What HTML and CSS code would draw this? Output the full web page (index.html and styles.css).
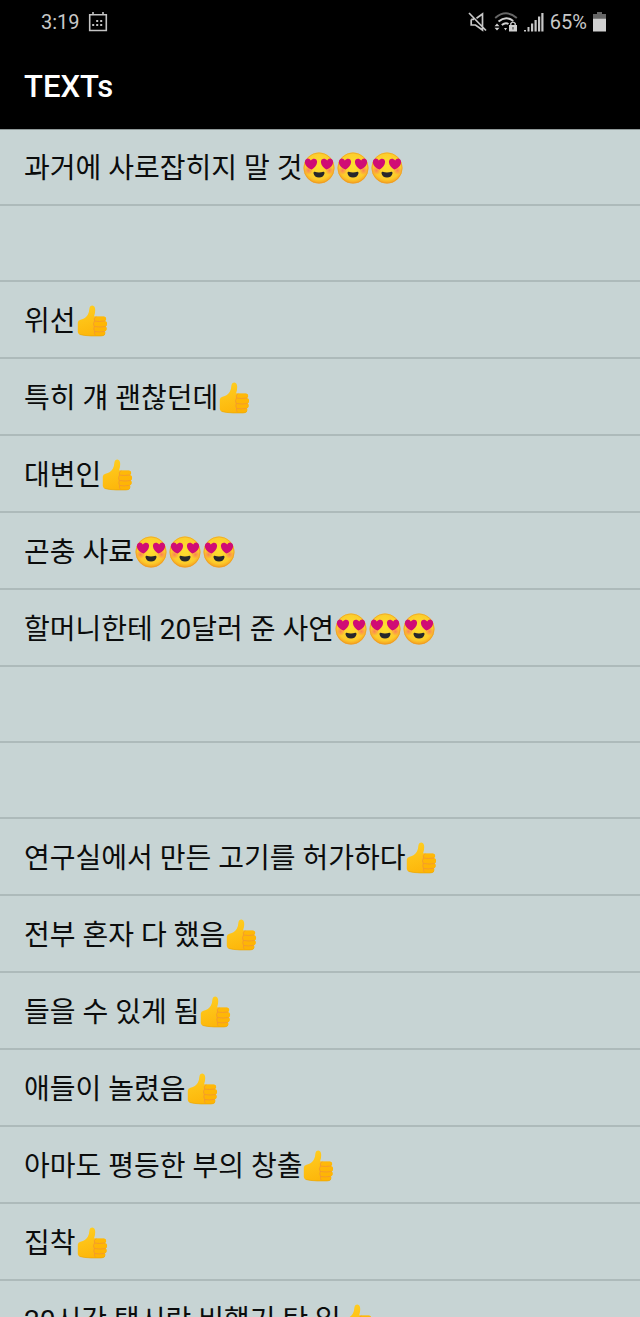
FILE: index.html
```
<!DOCTYPE html>
<html lang="ko">
<head>
<meta charset="utf-8">
<meta name="viewport" content="width=device-width, initial-scale=1">
<title>TEXTs</title>
<link rel="stylesheet" href="styles.css">
</head>
<body>
<svg class="sprite" aria-hidden="true">
  <defs>
    <radialGradient id="skin" cx=".5" cy=".42" r=".6">
      <stop offset="0" stop-color="#fde030"/><stop offset=".75" stop-color="#fccb2b"/><stop offset="1" stop-color="#f4981e"/>
    </radialGradient>
    <radialGradient id="blush"><stop offset="0" stop-color="#fb8553"/><stop offset="1" stop-color="#fb8553" stop-opacity="0"/></radialGradient>
    <linearGradient id="hand" x1="0" y1="0" x2=".3" y2="1"><stop offset="0" stop-color="#ffcf22"/><stop offset="1" stop-color="#fdb70b"/></linearGradient>
    <symbol id="love" viewBox="0 0 34 32">
      <circle cx="17" cy="16" r="15.4" fill="url(#skin)"/>
      <circle cx="17" cy="16" r="15.1" fill="none" stroke="#eb9a24" stroke-width=".6"/>
      <circle cx="6.5" cy="18.500" r="4.5" fill="url(#blush)"/><circle cx="27.5" cy="18.500" r="4.5" fill="url(#blush)"/>
      <path d="M9.8 17.6C5.6 16 2.2 12.6 3 8.9C3.7 6 7.4 5.5 8.8 8.6C11.1 5.400 15.2 6.500 15.1 10C15 13.200 12.600 15.800 9.800 17.600Z" fill="#d00c75"/>
      <path d="M24.200 17.600C28.400 16 31.800 12.600 31 8.900C30.300 6 26.600 5.500 25.200 8.600C22.900 5.400 18.800 6.500 18.900 10C19 13.200 21.400 15.800 24.200 17.600Z" fill="#d00c75"/>
      <path d="M12.600 19.700Q17 21.200 21.400 19.700Q22.700 19.500 22.500 21.200C22 24 20 25.500 17 25.500S12 24 11.500 21.200Q11.300 19.500 12.600 19.700Z" fill="#26282b"/>
    </symbol>
    <symbol id="thumb" viewBox="0 0 34 32">
      <path d="M1.800 17.500Q2 15.200 4.500 14.700Q9.500 13.600 11.800 9.800Q13.200 7.300 13.400 3.600Q13.800 .500 16.400 .500Q19.200 .900 19.200 5Q19.300 8 18.100 11.200L21 11.600H28Q30.300 12 30.200 14Q30.100 15.600 29 16Q31.300 16.700 31.100 19Q30.900 21 29.600 21.600Q31.200 22.500 30.600 24.500Q30.200 26 28.700 26.400Q29.900 27.600 29 29.300Q28 31 25 31H15Q7.500 30.800 3.800 29.500Q1.800 28.900 1.800 27Z" fill="url(#hand)"/>
      <path d="M20.300 11.600H28Q30.300 12 30.200 14Q30.100 15.600 29 16Q31.300 16.700 31.100 19Q30.900 21 29.600 21.600Q31.200 22.500 30.600 24.500Q30.200 26 28.700 26.400Q29.900 27.600 29 29.300Q28 31 25 31H19.500Q17.500 29.500 18.600 26.600Q17 24 18.200 21.400Q16.600 18.500 18.500 16Q17 13 20.300 11.600Z" fill="#ffb300" fill-opacity=".6"/>
      <path d="M18.500 16Q23 17 29 16M18.200 21.500Q24 22.500 29.600 21.600M18.600 26.500Q23 27.300 28.700 26.400M20.300 11.600Q17.200 13 18.500 16Q16.700 18.500 18.200 21.500Q17.200 24 18.600 26.500Q18 28.500 19.200 30" fill="none" stroke="#f19534" stroke-width=".8"/>
      <path d="M3.500 29.400Q8 30.700 15 30.900H25Q28 30.900 29 29.300" fill="none" stroke="#eda600" stroke-width=".7"/>
    </symbol>
  </defs>
</svg>
<header class="top">
  <div class="status">
    <time class="clock">3:19</time>
    <svg class="calendar" width="20" height="20" viewBox="0 0 20 20" role="img" aria-label="Calendar">
      <path d="M1.700 2.800H18.300V18.500H1.700ZM5 0V3M15 0V3" fill="none" stroke="#c4c4c4" stroke-width="1.600"/>
      <path d="M8.200 8h2v2h-2zM12.200 8h2v2h-2zM4.200 12h2v2h-2zM8.200 12h2v2h-2zM12.200 12h2v2h-2z" fill="#c4c4c4"/>
    </svg>
    <div class="indicators">
      <svg width="20" height="20" viewBox="0 0 20 20" role="img" aria-label="Muted">
        <path d="M3.200 7.500V13H7.500L14.500 18V2L8.500 6.300M3.200 7.300H6M1 1L18 18.500" fill="none" stroke="#c8c8c8" stroke-width="1.700"/>
      </svg>
      <svg width="24" height="20" viewBox="0 0 24 20" role="img" aria-label="Secure Wi-Fi">
        <path d="M1.200 6Q12 -3.500 22.800 6" fill="none" stroke="#666" stroke-width="1.900"/>
        <path d="M4.500 9.500Q12 3.200 19.200 9M7.800 13Q11.500 10 14.500 12" fill="none" stroke="#d0d0d0" stroke-width="2"/>
        <path d="M.500 14.300L3 11.500L5.500 14.300ZM.500 15.800H5.500L3 18.500ZM10 16H13L11.500 18.500ZM15 13H23V19.500H15Z" fill="#d0d0d0"/>
        <path d="M16.800 13.500V11.500Q19 8.800 21.200 11.500V13.500" fill="none" stroke="#d0d0d0" stroke-width="1.300"/>
        <path d="M18.500 15h1v2.500h-1z" fill="#333"/>
      </svg>
      <svg width="20" height="20" viewBox="0 0 20 20" role="img" aria-label="Signal strength">
        <path d="M0 18h2v1.500H0zM3.500 15h2v4.500h-2zM7 11.500h2.200v8H7zM10.500 8h2.200v11.500h-2.200zM14 4.500h2.200v15H14zM17.300 1h2.200v18.500h-2.200z" fill="#c8c8c8"/>
      </svg>
      <span class="percent">65%</span>
      <svg class="battery" width="13" height="20" viewBox="0 0 13 20" role="img" aria-label="Battery">
        <path d="M4 0h5v2h4v4.500H0V2h4z" fill="#666"/><path d="M0 6.500h13v13H0z" fill="#d0d0d0"/>
      </svg>
    </div>
  </div>
  <h1 class="title">TEXTs</h1>
</header>
<main>
  <ul class="list">
    <li class="row">과거에 사로잡히지 말 것<svg class="emoji" role="img" aria-label="😍"><use href="#love"/></svg><svg class="emoji" role="img" aria-label="😍"><use href="#love"/></svg><svg class="emoji" role="img" aria-label="😍"><use href="#love"/></svg></li>
    <li class="row empty"></li>
    <li class="row">위선<svg class="emoji" role="img" aria-label="👍"><use href="#thumb"/></svg></li>
    <li class="row">특히 걔 괜찮던데<svg class="emoji" role="img" aria-label="👍"><use href="#thumb"/></svg></li>
    <li class="row">대변인<svg class="emoji" role="img" aria-label="👍"><use href="#thumb"/></svg></li>
    <li class="row">곤충 사료<svg class="emoji" role="img" aria-label="😍"><use href="#love"/></svg><svg class="emoji" role="img" aria-label="😍"><use href="#love"/></svg><svg class="emoji" role="img" aria-label="😍"><use href="#love"/></svg></li>
    <li class="row">할머니한테 20달러 준 사연<svg class="emoji" role="img" aria-label="😍"><use href="#love"/></svg><svg class="emoji" role="img" aria-label="😍"><use href="#love"/></svg><svg class="emoji" role="img" aria-label="😍"><use href="#love"/></svg></li>
    <li class="row empty"></li>
    <li class="row empty"></li>
    <li class="row">연구실에서 만든 고기를 허가하다<svg class="emoji" role="img" aria-label="👍"><use href="#thumb"/></svg></li>
    <li class="row">전부 혼자 다 했음<svg class="emoji" role="img" aria-label="👍"><use href="#thumb"/></svg></li>
    <li class="row">들을 수 있게 됨<svg class="emoji" role="img" aria-label="👍"><use href="#thumb"/></svg></li>
    <li class="row">애들이 놀렸음<svg class="emoji" role="img" aria-label="👍"><use href="#thumb"/></svg></li>
    <li class="row">아마도 평등한 부의 창출<svg class="emoji" role="img" aria-label="👍"><use href="#thumb"/></svg></li>
    <li class="row">집착<svg class="emoji" role="img" aria-label="👍"><use href="#thumb"/></svg></li>
    <li class="row">20시간 택시랑 비행기 탄 일<svg class="emoji" role="img" aria-label="👍"><use href="#thumb"/></svg></li>
  </ul>
</main>
</body>
</html>
```
FILE: styles.css
```
* { box-sizing: border-box; }
html { background: #c7d4d4; }
body {
  margin: 0;
  height: 100vh;
  overflow: hidden;
  display: flex;
  flex-direction: column;
  color: #0b0c0c;
  font-family: Roboto, "Noto Sans CJK KR", sans-serif;
}
.sprite { position: absolute; width: 0; height: 0; }
.top {
  flex: none;
  background: #000;
  color: #fff;
}
.status {
  display: flex;
  align-items: center;
  gap: 8px;
  height: 44px;
  padding: 0 34px 0 41px;
  color: #c8c8c8;
  font-size: 20px;
  line-height: 24px;
}
.status svg { display: block; flex: none; }
.indicators {
  display: flex;
  align-items: center;
  gap: 6px;
  margin-left: auto;
}
.title {
  margin: 0;
  padding: 24px;
  font-size: 31px;
  line-height: 37px;
  font-weight: 500;
}
main {
  flex: 1;
  min-height: 0;
  overflow: hidden;
  box-shadow: inset 0 1px 0 #8f9999;
}
.list {
  margin: 0;
  padding: 0;
  list-style: none;
}
.row {
  display: flex;
  align-items: center;
  height: 77px;
  padding: 4px 24px 0;
  border-bottom: 2px solid #adbaba;
  font-size: 28px;
  line-height: 40px;
  white-space: pre;
}
.row.empty { height: 76px; }
.emoji {
  flex: none;
  width: 34px;
  height: 32px;
  margin-bottom: 2px;
}
```
